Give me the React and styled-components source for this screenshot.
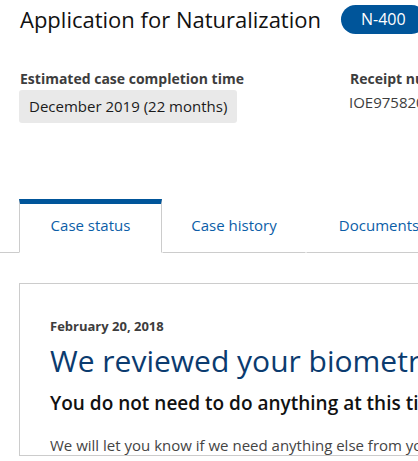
import styled, { createGlobalStyle } from 'styled-components';

const GlobalStyle = createGlobalStyle`
  html, body {
    margin: 0;
    padding: 0;
    background: #ffffff;
    overflow: hidden;
  }
  body {
    font-family: 'Open Sans', 'Liberation Sans', sans-serif;
    color: #1b1b1b;
  }
`;

const tabs = [
  { label: 'Case status', width: 143 },
  { label: 'Case history', width: 144 },
  { label: 'Documents', width: 146 },
];

export default function App() {
  return (
    <>
      <GlobalStyle />
      <Styled.Page>
        <Styled.Header>
          <Styled.Title>Application for Naturalization</Styled.Title>
          <Styled.Badge>N-400</Styled.Badge>
        </Styled.Header>

        <Styled.Meta>
          <Styled.MetaBlock>
            <Styled.MetaLabel>Estimated case completion time</Styled.MetaLabel>
            <Styled.Estimate>December 2019 (22 months)</Styled.Estimate>
          </Styled.MetaBlock>
          <Styled.MetaBlock>
            <Styled.MetaLabel>Receipt number</Styled.MetaLabel>
            <Styled.MetaValue>IOE9758201234</Styled.MetaValue>
          </Styled.MetaBlock>
        </Styled.Meta>

        <Styled.TabBar>
          <Styled.TabGap />
          {tabs.map((tab, i) => (
            <Styled.Tab key={tab.label} $active={i === 0} $width={tab.width}>
              {tab.label}
            </Styled.Tab>
          ))}
          <Styled.TabFill />
        </Styled.TabBar>

        <Styled.Card>
          <Styled.CardDate>February 20, 2018</Styled.CardDate>
          <Styled.CardTitle>We reviewed your biometrics appointment</Styled.CardTitle>
          <Styled.CardLead>You do not need to do anything at this time.</Styled.CardLead>
          <Styled.CardText>
            We will let you know if we need anything else from you.
          </Styled.CardText>
        </Styled.Card>
      </Styled.Page>
    </>
  );
}

const Styled = {
  Page: styled.div`
    width: 418px;
    height: 461px;
    overflow: hidden;
  `,

  Header: styled.div`
    display: flex;
    align-items: center;
    gap: 20px;
    padding: 4px 0 0 20px;
    white-space: nowrap;
  `,

  Title: styled.h1`
    margin: 0;
    font-size: 22px;
    font-weight: 400;
    line-height: 30px;
    color: #111111;
  `,

  Badge: styled.span`
    flex-shrink: 0;
    display: inline-flex;
    align-items: center;
    height: 29px;
    padding: 0 20px;
    border-radius: 15px;
    background: #00559a;
    color: #ffffff;
    font-size: 16px;
  `,

  Meta: styled.div`
    display: flex;
    gap: 105px;
    padding: 36px 0 0 19px;
    white-space: nowrap;
  `,

  MetaBlock: styled.div`
    display: flex;
    flex-direction: column;
    align-items: flex-start;
    flex-shrink: 0;
  `,

  MetaLabel: styled.div`
    padding-left: 1px;
    font-size: 14px;
    font-weight: 700;
    line-height: 18px;
    color: #3d3d3d;
  `,

  Estimate: styled.div`
    margin-top: 2px;
    padding: 7px 10px;
    border-radius: 3px;
    background: #e9e9e9;
    font-size: 15px;
    line-height: 19px;
    color: #1b1b1b;
  `,

  MetaValue: styled.div`
    margin-top: 5px;
    font-size: 15px;
    line-height: 19px;
    color: #3d3d3d;
  `,

  TabBar: styled.div`
    display: flex;
    margin-top: 76px;
    white-space: nowrap;
  `,

  TabGap: styled.div`
    width: 19px;
    flex-shrink: 0;
    border-bottom: 1px solid #cccccc;
  `,

  Tab: styled.div`
    flex-shrink: 0;
    width: ${({ $width }) => $width}px;
    height: 54px;
    padding-bottom: 6px;
    display: flex;
    align-items: center;
    justify-content: center;
    box-sizing: border-box;
    font-size: 15px;
    color: #0b5ea8;
    border-top: 5px solid ${({ $active }) => ($active ? '#00559a' : 'transparent')};
    border-left: 1px solid ${({ $active }) => ($active ? '#cccccc' : 'transparent')};
    border-right: 1px solid ${({ $active }) => ($active ? '#cccccc' : 'transparent')};
    border-bottom: 1px solid ${({ $active }) => ($active ? 'transparent' : '#cccccc')};
  `,

  TabFill: styled.div`
    flex: 1;
    border-bottom: 1px solid #cccccc;
  `,

  Card: styled.div`
    margin: 30px 0 0 19px;
    padding: 33px 0 0 30px;
    border: 1px solid #cccccc;
    border-right: none;
    white-space: nowrap;
  `,

  CardDate: styled.div`
    font-size: 13px;
    font-weight: 700;
    line-height: 18px;
    color: #3d3d3d;
  `,

  CardTitle: styled.div`
    margin-top: 8px;
    font-size: 30px;
    line-height: 36px;
    color: #0b3b6f;
  `,

  CardLead: styled.div`
    margin-top: 12px;
    font-size: 19px;
    font-weight: 600;
    line-height: 24px;
    color: #111111;
  `,

  CardText: styled.div`
    margin-top: 20px;
    font-size: 15px;
    line-height: 20px;
    color: #444444;
  `,
};
